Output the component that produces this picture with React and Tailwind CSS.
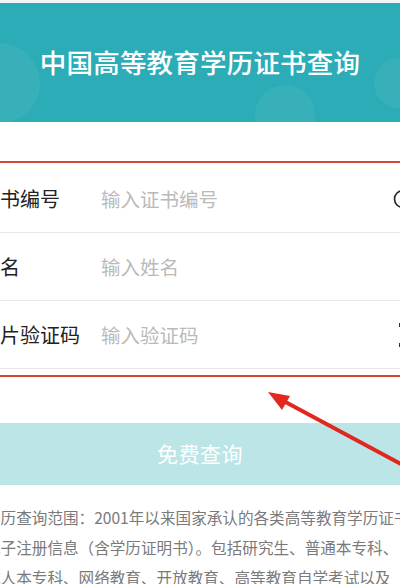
import { useState } from 'react';

const rows = [
  { label: '证书编号', placeholder: '输入证书编号', extra: 'info' },
  { label: '姓名', placeholder: '输入姓名' },
  { label: '图片验证码', placeholder: '输入验证码', extra: 'captcha' },
];

const notes = [
  '学历查询范围：2001年以来国家承认的各类高等教育学历证书',
  '电子注册信息（含学历证明书）。包括研究生、普通本专科、',
  '成人本专科、网络教育、开放教育、高等教育自学考试以及',
];

export default function App() {
  const [values, setValues] = useState({});

  return (
    <div
      className="relative w-[400px] h-[584px] overflow-hidden bg-white"
      style={{ fontFamily: '"Noto Sans CJK SC", "Noto Sans", sans-serif' }}
    >
      {/* Banner */}
      <div className="h-[3px] bg-[#eef6f7]" />
      <div className="relative h-[119px] overflow-hidden bg-[#2cacb6] flex items-center justify-center">
        <div className="absolute -left-10 top-[40px] w-[80px] h-[80px] rounded-full bg-white/5" />
        <div className="absolute -right-6 top-[55px] w-[50px] h-[50px] rounded-full bg-white/5" />
        <div className="absolute left-[255px] top-[82px] w-[60px] h-[60px] rounded-full bg-white/5" />
        <h1 className="relative text-white text-[26.5px] tracking-[0.2px] font-medium pb-[2px]">中国高等教育学历证书查询</h1>
      </div>

      {/* Form */}
      <div className="mt-[39px] border-t-2 border-b-2 border-[#d2463c] pt-[2px] pb-[6px] bg-[#fffdfd]">
        {rows.map((row, i) => (
          <div key={row.label} className="flex items-center h-[68px] border-b border-[#e9e9ec] bg-white">
            <span className="-ml-[20px] w-[121px] shrink-0 text-[20px] text-[#222]">{row.label}</span>
            <input
              value={values[i] || ''}
              onChange={(e) => setValues({ ...values, [i]: e.target.value })}
              placeholder={row.placeholder}
              className="flex-1 min-w-0 text-[19.5px] text-[#333] placeholder:text-[#bababa] outline-none bg-transparent"
            />
            {row.extra === 'info' && (
              <svg width="20" height="20" viewBox="0 0 20 20" className="shrink-0 -mr-[13px]">
                <circle cx="10" cy="10" r="8.5" fill="none" stroke="#222" strokeWidth="1.6" />
              </svg>
            )}
            {row.extra === 'captcha' && (
              <div className="shrink-0 w-[4px] h-[24px] flex flex-col justify-between items-end -mr-[1px]">
                <span className="w-[2px] h-[4px] bg-[#333]" />
                <span className="w-[2px] h-[4px] bg-[#333]" />
              </div>
            )}
          </div>
        ))}
      </div>

      {/* Button */}
      <button className="mt-[46px] w-full h-[62px] bg-[#bce5e8] text-white text-[21px] tracking-[0.5px]">
        免费查询
      </button>

      {/* Notes */}
      <div className="mt-[17px] -ml-[15px] w-[460px] text-[15.6px] leading-[30px] text-[#7a7a7a]">
        {notes.map((line) => (
          <p key={line} className="whitespace-nowrap">{line}</p>
        ))}
      </div>

      {/* Annotation arrow */}
      <svg className="absolute inset-0 pointer-events-none" width="400" height="584">
        <line x1="278" y1="398" x2="412" y2="470" stroke="#e0281f" strokeWidth="4" strokeLinecap="round" />
        <polygon points="268,392 290,396 282,410" fill="#e0281f" />
      </svg>
    </div>
  );
}
